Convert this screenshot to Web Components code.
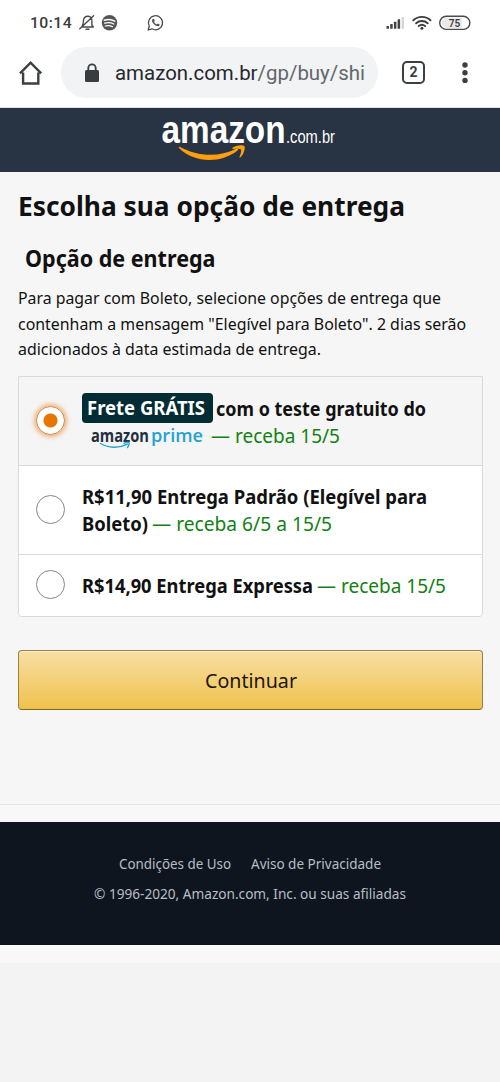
<!DOCTYPE html>
<html lang="pt-BR">
<head>
<meta charset="utf-8">
<title>Escolha sua opção de entrega</title>
<style>
html,body{margin:0;background:#f3f3f3}
body{font-family:"Noto Sans","Open Sans",sans-serif;color:#111}
</style>
</head>
<body>
<checkout-page></checkout-page>
<script>
const define=(name,html,setup)=>customElements.define(name,class extends HTMLElement{
  connectedCallback(){
    if(this.shadowRoot)return;
    const t=document.createElement('template');
    t.innerHTML=html;
    this.attachShadow({mode:'open'}).append(t.content.cloneNode(true));
    if(setup)setup(this,this.shadowRoot);
  }
});

/* A single line of text condensed or widened to the given width. */
define('fit-text',`<style>
:host{display:inline-block;white-space:nowrap;vertical-align:top;text-align:left}
span{display:inline-block;transform-origin:0 50%}
</style><span><slot></slot></span>`,(host,root)=>{
  const w=+host.getAttribute('w'),s=root.querySelector('span');
  const natural=s.getBoundingClientRect().width;
  host.style.width=w+'px';
  s.style.transform='scaleX('+w/natural+')';
});

define('status-bar',`<style>
:host{display:flex;height:46px;box-sizing:border-box;background:#fff}
svg{display:block}
text{font-family:Roboto,sans-serif}
</style>
<svg width="500" height="46" viewBox="0 0 500 46" fill="none" stroke="#4a4a4a">
<text x="30" y="28.4" font-size="15.500" font-weight="500" letter-spacing=".4" textLength="42" lengthAdjust="spacingAndGlyphs" fill="#3c3c3c" stroke="none">10:14</text>
<g stroke-width="1.4" stroke-linecap="round" stroke-linejoin="round">
<path d="M82.500 27h10.800M82.300 25.500c1.200-1.800 1-3.600 1.200-5 .3-2.600 1.900-4.200 4.200-4.200 2.200 0 3.900 1.400 4.200 4M91.900 21.500v3.700l1.400 1.800M86 29.300h3M79.800 28.800 93.600 15.800"/>
</g>
<circle cx="109.500" cy="22.700" r="7.700" fill="#555" stroke="none"/>
<g stroke="#fff" stroke-linecap="round"><path d="M104.300 20.200c3.500-1.100 7.300-.8 10.500.9" stroke-width="1.500"/><path d="M104.700 23.200c3.200-.9 6.300-.6 9.100.8" stroke-width="1.300"/><path d="M105.200 26c2.700-.7 5.200-.4 7.400.7" stroke-width="1.100"/></g>
<path d="M148.200 30l1.100-4a7 7 0 1 1 2.700 2.800z" stroke-width="1.300" stroke-linejoin="round"/>
<path d="M152.500 19.200c.5-.6 1.300-.6 1.600.1l.6 1.400c.1.500-.6 1-.6 1.300.5 1 1.500 1.900 2.600 2.300.4 0 .8-.9 1.200-.8l1.500.8c.5.400.1 1.200-.5 1.700-1.100.8-3.300-.1-4.900-1.700-1.700-1.600-2.600-3.900-1.500-5.100z" fill="#555" stroke="none"/>
<g fill="#444" stroke="none"><rect x="386.500" y="26" width="2.500" height="2.800" rx=".5"/><rect x="390.200" y="24" width="2.500" height="4.800" rx=".5"/><rect x="393.900" y="21.700" width="2.500" height="7.100" rx=".5"/><rect x="397.600" y="19.200" width="2.500" height="9.600" rx=".5"/><rect x="401.600" y="17" width="2.400" height="11.800" rx=".5" fill="#d5d5d5"/></g>
<g stroke-width="1.900" stroke-linecap="round" stroke="#3e3e3e"><path d="M413.300 20.300c4.900-4.600 12.300-4.600 17.200 0M416.100 23.300c3.300-3 8.300-3 11.600 0M418.700 26.100c1.900-1.600 4.500-1.600 6.400 0"/></g>
<circle cx="421.900" cy="28.300" r="1.500" fill="#3e3e3e" stroke="none"/>
<rect x="439.700" y="16.200" width="30.200" height="13.200" rx="6.600" fill="#fff" stroke-width="1.400"/>
<path d="M447 17.700h15v10.200h-15a5.100 5.100 0 0 1 0-10.200z" fill="#e9e9e9" stroke="none"/>
<text x="448.700" y="26.900" font-size="11" font-weight="600" textLength="11.500" lengthAdjust="spacingAndGlyphs" fill="#3c3c3c" stroke="none">75</text>
</svg>`);

define('browser-bar',`<style>
:host{display:flex;align-items:center;height:62px;box-sizing:border-box;padding:0 0 8px 19px;background:#fff;border-bottom:1px solid #dbe3ea;font-family:Roboto,sans-serif}
svg{display:block;flex:none}
.home{margin-right:18px}
.pill{display:flex;align-items:center;box-sizing:border-box;width:317px;height:51px;border-radius:26px;background:#f1f3f5;padding-left:23px;font-size:20.500px;color:#26282b}
.pill svg{margin-right:14.500px}
i{font-style:normal;color:#63676b}
.tab{box-sizing:border-box;width:23px;height:23px;border:2.400px solid #3c3f42;border-radius:5px;margin:0 39px 0 24px;text-align:center;font-size:14px;line-height:19.500px;font-weight:700;color:#3c3f42}
.dots{margin-left:-2.500px}
</style>
<svg class="home" width="24" height="26" viewBox="0 0 24 26" fill="none" stroke="#3c3f42" stroke-width="2.400" stroke-linejoin="miter"><path d="M1 13.300 11.600 2.600 22.200 13.300M4.100 12.500V23.500H19.300V12.500"/></svg>
<div class="pill"><svg width="16" height="20" viewBox="0 0 16 20"><rect x="1" y="7" width="14" height="12" rx="1.500" fill="#3a3d40"/><path d="M4.300 8V5a3.700 3.700 0 0 1 7.400 0v3" fill="none" stroke="#3a3d40" stroke-width="1.800"/></svg><fit-text w="250">amazon.com.br<i>/gp/buy/shi</i></fit-text></div>
<div class="tab">2</div>
<svg class="dots" width="6" height="22" viewBox="0 0 6 22" fill="#3c3f42"><circle cx="3" cy="3" r="2.700"/><circle cx="3" cy="10.700" r="2.700"/><circle cx="3" cy="18.400" r="2.700"/></svg>`);

define('site-header',`<style>
:host{display:flex;justify-content:center;height:64px;background:#283443}
svg{display:block}
</style>
<svg width="500" height="64" viewBox="0 108 500 64">
<text x="161.500" y="143.300" font-family="Liberation Sans" font-size="38" font-weight="700" fill="#fff" textLength="124" lengthAdjust="spacingAndGlyphs">amazon</text>
<text x="286" y="143" font-family="Liberation Sans" font-size="18" fill="#fff" textLength="49" lengthAdjust="spacingAndGlyphs">.com.br</text>
<path d="M180 147c17 9 38 11 56 1.800 1.900-1 3 .7 1.300 1.900-17 13-43 12.200-57.800-2.200-1.200-1.100-.8-2.200.5-1.500z" fill="#ff9e0f"/>
<path d="M232.300 148c3.500-3.300 10.800-3.300 12-2 1.300 1.500-.3 8.300-3.800 11.300-.7.600-1.300.2-1-.6 1-2.600 2.300-6 1.500-7.200-.9-1.100-5-.8-7.800-.6-.9.100-1.300-.4-.9-.9z" fill="#ff9e0f"/>
</svg>`);

define('prime-logo',`<style>
:host{display:inline-block;width:129px;height:27px;vertical-align:top}
svg{display:block}
</style>
<svg width="129" height="27" viewBox="82 422 129 27">
<text x="91" y="441.500" font-family="Open Sans" font-size="17" font-weight="700" fill="#232f3e" textLength="58" lengthAdjust="spacingAndGlyphs">amazon</text>
<text x="151" y="441.500" font-family="Open Sans" font-size="18.500" font-weight="600" fill="#23a3d2" textLength="52" lengthAdjust="spacingAndGlyphs">prime</text>
<path d="M100.500 443.500c8 4.700 18.500 5 27 .7M124 443.300c2-.9 4.500-1 5-.5.500.700-.200 3.200-1.500 4.700" fill="none" stroke="#23a3d2" stroke-width="1.400" stroke-linecap="round"/>
</svg>`);

define('delivery-option',`<style>
:host{display:flex;align-items:center;box-sizing:border-box;padding-left:17px;background:#fff;border-top:1px solid #d9d9d9;font-size:19.500px;line-height:27.500px}
:host([checked]){background:#f5f5f5;border-top:0}
.radio{box-sizing:border-box;width:29px;height:29px;border:1.500px solid #858585;border-radius:50%;background:#fff;margin:-2px 17px 0 0;flex:none}
:host([checked]) .radio{border-color:#c98540;background:radial-gradient(circle,#e77600 6.500px,#fff 7.500px);box-shadow:0 0 5px 1.500px #f0a566}
</style><span class="radio"></span><div><slot></slot></div>`);

define('delivery-list',`<style>
:host{display:grid;grid-template-rows:88px 89px 62px;box-sizing:border-box;width:465px;height:241px;border:1px solid #d9d9d9;border-radius:0 0 4px 4px;overflow:hidden}
b{font-weight:700}
.line{display:flex;height:27.500px}
.free{align-items:center;height:31px;margin-bottom:-2px}
.badge{box-sizing:border-box;width:131.500px;height:30px;border-radius:4px;background:#022c33;color:#fff;padding-left:5.500px;line-height:30px;margin:0 2.500px 0 -.5px}
.green{color:#138013}
.gap{margin-left:4px}
</style>
<delivery-option checked><div class="line free"><b class="badge"><fit-text w="118">Frete GRÁTIS</fit-text></b><b><fit-text w="210">com o teste gratuito do</fit-text></b></div><div class="line"><prime-logo></prime-logo><fit-text class="green" w="129">— receba 15/5</fit-text></div></delivery-option>
<delivery-option><div class="line"><b><fit-text w="345">R$11,90 Entrega Padrão (Elegível para</fit-text></b></div><div class="line"><b><fit-text w="66">Boleto)</fit-text></b><fit-text class="green gap" w="180">— receba 6/5 a 15/5</fit-text></div></delivery-option>
<delivery-option><div class="line"><b><fit-text w="231">R$14,90 Entrega Expressa</fit-text></b><fit-text class="green gap" w="129">— receba 15/5</fit-text></div></delivery-option>`);

define('primary-button',`<style>
:host{display:block}
button{display:block;box-sizing:border-box;width:465px;height:60px;padding:0;border:1px solid #9c8142;border-bottom-color:#806821;border-radius:4px;background:linear-gradient(#f7dfa5,#f0c14b);box-shadow:inset 0 1px 0 #fbeccb;font:20.500px/56px "Noto Sans",sans-serif;color:#1d1509;text-align:center}
</style><button><slot></slot></button>`);

define('site-footer',`<style>
:host{display:flex;flex-direction:column;align-items:center;box-sizing:border-box;height:123px;padding-top:27px;background:#0f151f;color:#b9bdc3;font-size:14.300px;line-height:30px}
nav{display:flex;gap:20px}
</style><nav><fit-text w="112">Condições de Uso</fit-text><fit-text w="130">Aviso de Privacidade</fit-text></nav><fit-text w="312">© 1996-2020, Amazon.com, Inc. ou suas afiliadas</fit-text>`);

define('checkout-page',`<style>
:host{display:block;width:500px;height:1082px;overflow:hidden;background:#f3f3f3}
main{display:flow-root;box-sizing:border-box;height:632px;padding:0 17px 0 18px;background:#f6f6f6}
h1,h2,p{margin:0}
h1{font-size:27px;line-height:32px;margin:18px 0 0 -.5px}
h2{font-size:22.500px;line-height:30px;margin:22px 0 0 6.500px}
p{font-size:16px;line-height:25.500px;height:76.500px;margin:12px 0 13.500px;margin-left:-.5px}
p fit-text{display:block}
primary-button{margin-top:33px}
.rule{height:18px;box-sizing:border-box;border-top:1px solid #e4e4e4;background:#f8f8f8}
.end{height:18px;background:#f8f8f8}
</style>
<status-bar></status-bar><browser-bar></browser-bar><site-header></site-header>
<main>
<h1><fit-text w="387">Escolha sua opção de entrega</fit-text></h1>
<h2><fit-text w="190.500">Opção de entrega</fit-text></h2>
<p><fit-text w="423">Para pagar com Boleto, selecione opções de entrega que</fit-text><fit-text w="448">contenham a mensagem "Elegível para Boleto". 2 dias serão</fit-text><fit-text w="303">adicionados à data estimada de entrega.</fit-text></p>
<delivery-list></delivery-list>
<primary-button><fit-text w="92">Continuar</fit-text></primary-button>
</main>
<div class="rule"></div><site-footer></site-footer><div class="end"></div>`);
</script>
</body>
</html>
